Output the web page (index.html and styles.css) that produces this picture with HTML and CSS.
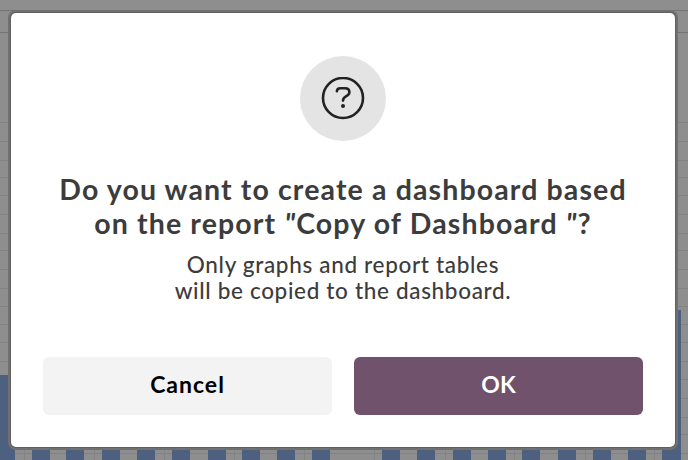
FILE: index.html
```html
<!DOCTYPE html>
<html lang="en">
<head>
  <meta charset="UTF-8">
  <meta name="viewport" content="width=device-width, initial-scale=1.0">
  <title>Create dashboard</title>
  <link rel="stylesheet" href="styles.css">
</head>
<body>
  <!-- Report chart behind the dialog -->
  <svg class="chart" width="688" height="460" viewBox="0 0 688 460" shape-rendering="crispEdges" aria-hidden="true">
    <path class="rule" d="M0 10.5H688M0 32.5H688"/>
    <path class="grid-line" d="M0 122.5H688M0 141.5H688M0 160.5H688M0 177.5H688M0 195.5H688M0 214.5H688M0 233.5H688M0 250.5H688M0 269.5H688M0 288.5H688M0 306.5H688M0 324.5H688M0 342.5H688M0 361.5H688M0 379.5H688M0 398.5H688M0 417.5H688M0 434.5H688M0 453.5H688"/>
    <path class="grid-line" d="M24.5 440V460M94.5 440V460M164.5 440V460M234.5 440V460M304.5 440V460M374.5 440V460M445.5 440V460M514.5 440V460M585.5 440V460M654.5 440V460"/>
    <path class="bars" d="M0 375H15V460H0zM32 420h18v40h-18zM66 420h18v40h-18zM102 420h18v40h-18zM137 420h18v40h-18zM172 420h18v40h-18zM208 420h18v40h-18zM242 420h18v40h-18zM277 420h18v40h-18zM312 420h18v40h-18zM382 420h18v40h-18zM417 420h18v40h-18zM453 420h18v40h-18zM488 420h18v40h-18zM522 420h18v40h-18zM558 420h18v40h-18zM593 420h18v40h-18zM628 420h18v40h-18zM662 310h19v150h-19z"/>
  </svg>

  <div class="modal" role="dialog" aria-labelledby="modal-title">
    <div class="modal-icon">
      <svg width="44" height="44" viewBox="0 0 44 44" fill="none" stroke="#222" stroke-width="2.6" stroke-linecap="round" stroke-linejoin="round">
        <circle cx="22" cy="21" r="20"/>
        <path d="M15.9 14.3C16 12.2 17.4 11.3 19.3 11.3H24C26.8 11.3 28.4 12.8 28.4 15.2C28.4 19.8 22 18.6 22 23.6"/>
        <circle cx="22" cy="29" r="2" fill="#222" stroke="none"/>
      </svg>
    </div>
    <h1 class="modal-title" id="modal-title">Do you want to create a dashboard based<br>on the report <span class="quote">"</span>Copy of Dashboard <span class="quote">"</span>?</h1>
    <p class="modal-text">Only graphs and report tables<br>will be copied to the dashboard.</p>
    <div class="modal-actions">
      <button class="button cancel-button">Cancel</button>
      <button class="button ok-button">OK</button>
    </div>
  </div>
</body>
</html>
```
FILE: styles.css
```css
* {
  box-sizing: border-box;
}

body {
  margin: 0;
  height: 460px;
  overflow: hidden;
  background-color: #8e8e8e;
  font-family: Lato, "Open Sans", sans-serif;
}

.chart {
  display: block;
}

.rule {
  stroke: #747474;
}

.grid-line {
  stroke: #838383;
}

.bars {
  fill: #4d607f;
}

.modal {
  position: absolute;
  top: 13px;
  left: 11px;
  width: 664px;
  height: 434px;
  padding: 43px 32px 32px;
  display: flex;
  flex-direction: column;
  align-items: center;
  background-color: #fff;
  border-radius: 5px;
  box-shadow: 0 0 0 1px #606060, 0 0 0 3px #707070;
  text-align: center;
  white-space: nowrap;
}

.modal-icon {
  width: 86px;
  height: 85px;
  display: flex;
  align-items: center;
  justify-content: center;
  border-radius: 50%;
  background-color: #e4e4e4;
}

.modal-title {
  margin: 31px 0 0;
  font-size: 28.5px;
  line-height: 34px;
  font-weight: 700;
  letter-spacing: 1.13px;
  color: #3c3c3c;
}

.quote {
  font-style: italic;
}

.modal-text {
  margin: 12px 0 0;
  font-size: 22.5px;
  line-height: 26px;
  font-weight: 500;
  letter-spacing: 0.67px;
  color: #3c3c3c;
}

.modal-actions {
  width: 600px;
  margin-top: auto;
  display: grid;
  grid-template-columns: 1fr 1fr;
  gap: 22px;
}

.button {
  height: 58px;
  padding: 0 0 4px;
  border: none;
  border-radius: 6px;
  font-family: inherit;
  font-size: 23px;
  font-weight: 700;
  cursor: pointer;
}

.cancel-button {
  background-color: #f3f3f3;
  color: #000;
  letter-spacing: 1px;
}

.ok-button {
  background-color: #70526c;
  color: #fff;
}
```
